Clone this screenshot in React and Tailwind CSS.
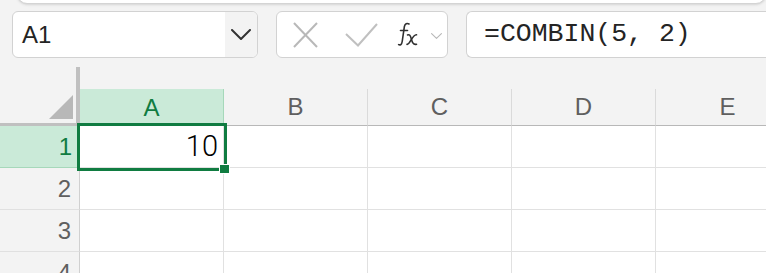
import React from 'react';

const cols = ['A', 'B', 'C', 'D', 'E'];
const rows = [1, 2, 3, 4];

const Chevron = ({ className, color = '#333', w = 20, h = 11 }) => (
  <svg className={className} width={w} height={h} viewBox="0 0 20 11" fill="none">
    <path d="M1 1 L10 10 L19 1" stroke={color} strokeWidth="2" strokeLinecap="round" strokeLinejoin="round" />
  </svg>
);

const FxIcon = () => (
  <svg width="24" height="25" viewBox="0 0 24 25" fill="none" stroke="#303030" strokeWidth="1.6" strokeLinecap="round">
    <path d="M13 2 C11 0.8 9 1.6 8.4 4.5 L6.2 19.5 C5.8 22.5 4.2 23.5 2.6 22.6" />
    <path d="M4.5 8.5 H11.5" />
    <path d="M11.5 13 C13.4 12 14.4 13.5 15.2 16.5 C16 19.5 17 23.2 20.5 22.2" />
    <path d="M20.5 12.8 C18.6 12.6 16.6 15.4 14.8 18.4 C13.6 20.6 12.6 22.6 11 22.4" />
  </svg>
);

function Toolbar() {
  return (
    <div className="flex items-stretch mt-[7px] h-[47px] pl-[12px]">
      <div className="flex w-[246px] rounded-[6px] border-[1.5px] border-[#d2d2d2] bg-white overflow-hidden">
        <div className="flex-1 flex items-center pl-[9px] text-[24px] text-[#242424] font-['Liberation_Sans',sans-serif]">A1</div>
        <div className="w-[32px] flex items-center justify-center bg-[#f3f3f3]">
          <Chevron />
        </div>
      </div>
      <div className="ml-[18px] flex items-center w-[172px] rounded-[6px] border-[1.5px] border-[#d2d2d2] bg-white">
        <svg className="ml-[16px]" width="25" height="26" viewBox="0 0 25 26" fill="none" stroke="#b8b8b8" strokeWidth="2">
          <path d="M1 1 L24 25" />
          <path d="M24 1 L1 25" />
        </svg>
        <svg className="ml-[27px]" width="33" height="24" viewBox="0 0 33 24" fill="none" stroke="#c0c0c0" strokeWidth="2">
          <path d="M1 11 L13 22.5 L32 1" />
        </svg>
        <div className="ml-[18px]">
          <FxIcon />
        </div>
        <Chevron className="ml-[11px] mt-[2px]" color="#b8b8b8" w={11} h={6} />
      </div>
      <div className="ml-[18px] flex-1 flex items-center pl-[17px] rounded-l-[6px] border-[1.5px] border-r-0 border-[#d2d2d2] bg-white text-[26.5px] text-[#242424] font-['Liberation_Mono',monospace] whitespace-pre">
        =COMBIN(5, 2)
      </div>
    </div>
  );
}

function Grid() {
  return (
    <div className="relative">
      <div className="grid grid-cols-[80px_repeat(5,144px)] grid-rows-[37px_repeat(4,42px)] font-['Liberation_Sans',sans-serif] text-[24px]">
        <div className="flex items-end justify-end pr-[3px] pb-[4px] bg-[#f3f3f3] border-r-[4px] border-b-[3px] border-[#c0c0c0]">
          <svg width="24" height="24" viewBox="0 0 24 24">
            <polygon points="24,0 24,24 0,24" fill="#b8b8b8" />
          </svg>
        </div>
        {cols.map((c) => (
          <div
            key={c}
            className={
              c === 'A'
                ? 'flex items-center justify-center bg-[#caead8] text-[#107c41] border-r border-[#a6d8ba]'
                : 'flex items-center justify-center bg-[#f3f3f3] text-[#5f5f5f] border-r border-b border-r-[#dadada] border-b-[#b8b8b8]'
            }
          >
            {c}
          </div>
        ))}
        {rows.map((r) => (
          <React.Fragment key={r}>
            <div
              className={
                r === 1
                  ? 'flex items-center justify-end pr-[8px] bg-[#caead8] text-[#107c41] border-b border-[#a6d8ba]'
                  : 'flex items-center justify-end pr-[8px] bg-[#f3f3f3] text-[#5f5f5f] border-r border-b border-r-[#d0d0d0] border-b-[#e0e0e0]'
              }
            >
              {r}
            </div>
            {cols.map((c) => (
              <div
                key={c}
                className="flex items-center justify-end pr-[5px] bg-white border-r border-b border-[#e1e1e1] text-[29px] font-light text-black font-['Roboto',sans-serif]"
              >
                {r === 1 && c === 'A' ? '10' : ''}
              </div>
            ))}
          </React.Fragment>
        ))}
      </div>
      <div className="absolute left-[77px] top-[34px] w-[150px] h-[48px] border-[3px] border-[#107c41]" />
      <div className="absolute left-[219px] top-[75px] w-[11px] h-[10px] bg-[#107c41] border border-white" />
    </div>
  );
}

export default function App() {
  return (
    <div className="w-[766px] h-[273px] overflow-hidden bg-[#f3f3f3]">
      <div className="ml-[17px] -mt-[10px] h-[14px] rounded-b-[10px] bg-white border border-[#d4d4d4] shadow-sm" />
      <Toolbar />
      <div className="h-[31px] pt-[9px]">
        <div className="ml-[76px] w-[4px] h-[22px] bg-[#c0c0c0]" />
      </div>
      <Grid />
    </div>
  );
}
